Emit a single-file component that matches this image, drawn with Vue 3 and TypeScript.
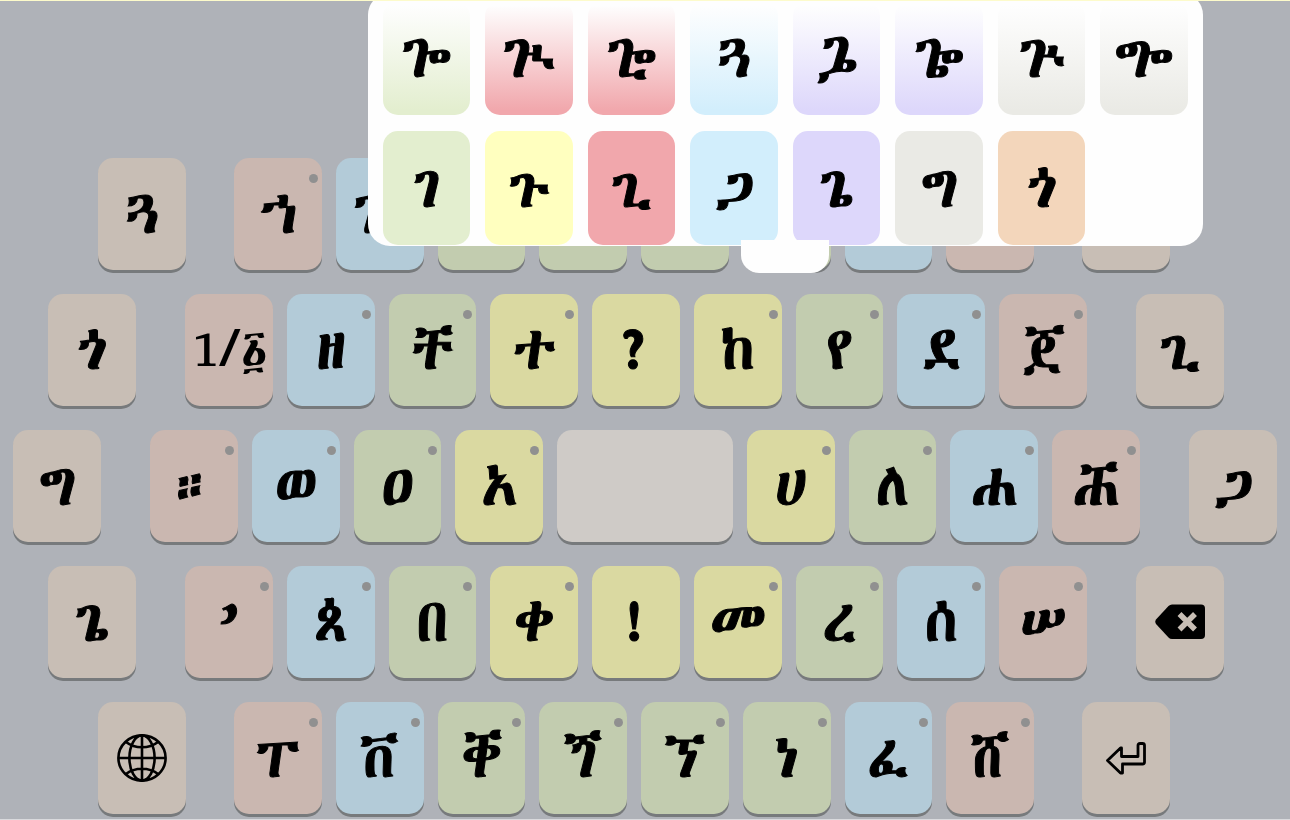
<script setup lang="ts">
type Tone = 'tan' | 'pink' | 'blue' | 'green' | 'yellow' | 'space'
type Icon = 'globe' | 'backspace' | 'enter'

interface Key {
  label: string
  tone: Tone
  dot?: boolean
  icon?: Icon
  name?: string
}

interface Row {
  id: string
  left: Key
  main: Key[]
  right: Key
}

interface Choice {
  label: string
  tone: string
}

const k = (label: string, tone: Tone, dot = true): Key => ({ label, tone, dot })
const side = (label: string): Key => ({ label, tone: 'tan' })
const action = (icon: Icon, name: string): Key => ({ label: '', tone: 'tan', icon, name })

const rows: Row[] = [
  {
    id: 'outer',
    left: side('ጓ'),
    main: [
      k('ኀ', 'pink'), k('ጒ', 'blue', false), k('', 'green', false), k('', 'green', false),
      k('', 'green', false), k('', 'green', false), k('', 'blue', false), k('', 'pink', false),
    ],
    right: side(''),
  },
  {
    id: 'middle',
    left: side('ጎ'),
    main: [
      k('1/፩', 'pink', false), k('ዘ', 'blue'), k('ቸ', 'green'), k('ተ', 'yellow'), k('?', 'yellow', false),
      k('ከ', 'yellow'), k('የ', 'green'), k('ደ', 'blue'), k('ጀ', 'pink'),
    ],
    right: side('ጊ'),
  },
  {
    id: 'home',
    left: side('ግ'),
    main: [
      k('።', 'pink'), k('ወ', 'blue'), k('ዐ', 'green'), k('አ', 'yellow'),
      { label: '', tone: 'space', name: 'Space' },
      k('ሀ', 'yellow'), k('ለ', 'green'), k('ሐ', 'blue'), k('𞟠', 'pink'),
    ],
    right: side('ጋ'),
  },
  {
    id: 'middle',
    left: side('ጌ'),
    main: [
      k('’', 'pink'), k('ጰ', 'blue'), k('በ', 'green'), k('ቀ', 'yellow'), k('!', 'yellow', false),
      k('መ', 'yellow'), k('ረ', 'green'), k('ሰ', 'blue'), k('ሠ', 'pink'),
    ],
    right: action('backspace', 'Backspace'),
  },
  {
    id: 'outer',
    left: action('globe', 'Switch keyboard'),
    main: [
      k('ፐ', 'pink'), k('ቨ', 'blue'), k('ቐ', 'green'), k('ጘ', 'green'),
      k('ኘ', 'green'), k('ነ', 'green'), k('ፈ', 'blue'), k('ሸ', 'pink'),
    ],
    right: action('enter', 'Enter'),
  },
]

const choices: Choice[] = [
  { label: 'ጐ', tone: 'lime fade' },
  { label: 'ጒ', tone: 'rose fade' },
  { label: '𞟸', tone: 'rose fade' },
  { label: 'ጓ', tone: 'sky fade' },
  { label: 'ጔ', tone: 'violet fade' },
  { label: '𞟹', tone: 'violet fade' },
  { label: 'ጕ', tone: 'stone fade' },
  { label: '𞟺', tone: 'stone fade' },
  { label: 'ገ', tone: 'lime' },
  { label: 'ጉ', tone: 'lemon' },
  { label: 'ጊ', tone: 'rose' },
  { label: 'ጋ', tone: 'sky' },
  { label: 'ጌ', tone: 'violet' },
  { label: 'ግ', tone: 'stone' },
  { label: 'ጎ', tone: 'peach' },
]

const cells = (row: Row) => [
  { part: 'edge', keys: [row.left] },
  { part: 'main', keys: row.main },
  { part: 'edge', keys: [row.right] },
]
</script>

<template>
  <main class="keyboard">
    <div v-for="(row, r) in rows" :key="r" class="row" :class="row.id">
      <div v-for="(cell, c) in cells(row)" :key="c" class="group" :class="cell.part">
        <button
          v-for="(key, i) in cell.keys"
          :key="i"
          type="button"
          class="key"
          :class="[key.tone, { number: key.label.startsWith('1') }]"
          :aria-label="key.name"
        >
          <span v-if="key.label" class="label">{{ key.label }}</span>
          <svg v-if="key.icon === 'globe'" class="globe" viewBox="0 0 50 48" fill="none" stroke="#000" stroke-width="2.6">
            <ellipse cx="25" cy="24" rx="23.6" ry="22.6" />
            <ellipse cx="25" cy="24" rx="12.6" ry="22.6" />
            <path d="M25 1.4V46.6M1.4 24H48.6M9 8C18 15 32 15 41 8M9 40C18 33 32 33 41 40" />
          </svg>
          <svg v-if="key.icon === 'backspace'" class="backspace" viewBox="0 0 50 36">
            <path d="M17 .5H46Q50 .5 50 4.500V31Q50 35 46 35H17Q15 35 13.500 33.500L1 20Q-.5 17.800 1 15.500L13.500 2Q15 .5 17 .5Z" />
            <path d="M24.500 10L40 25.500M40 10L24.500 25.500" stroke="#c8beb5" stroke-width="5.500" />
          </svg>
          <svg v-if="key.icon === 'enter'" class="enter" viewBox="0 0 40 33" fill="none" stroke="#000" stroke-width="2.800" stroke-linejoin="round">
            <path d="M15.500 6V14.500H32V3.500Q32 1.500 34 1.500H36.500Q38.500 1.500 38.500 3.500V20Q38.500 22 36.500 22H16.500V31L14.500 31L1.500 18.500L14.500 6Z" />
          </svg>
          <i v-if="key.dot" class="dot"></i>
        </button>
      </div>
    </div>

    <div class="popup">
      <div class="tail"></div>
      <div class="choices">
        <button v-for="(choice, i) in choices" :key="i" type="button" class="choice" :class="choice.tone">
          <span class="label">{{ choice.label }}</span>
        </button>
      </div>
    </div>
  </main>
</template>

<style>
body {
  margin: 0;
}
</style>

<style scoped>
.keyboard {
  position: relative;
  box-sizing: border-box;
  min-height: 100vh;
  padding: 157px 0 4px;
  display: flex;
  flex-direction: column;
  gap: 24px;
  overflow: hidden;
  background: #afb2b8;
  border-top: 1px solid #fdfbcb;
  border-bottom: 1px solid #d9dadd;
}

.row {
  display: flex;
  gap: 49px;
}

.outer {
  padding: 0 120px 0 98px;
  gap: 48px;
}

.middle {
  padding: 0 66px 0 48px;
}

.home {
  padding: 0 13px;
}

.group {
  display: flex;
  gap: 14px;
  min-width: 0;
}

.edge {
  flex: 88 1 0;
}

.outer .main {
  flex: 800 1 0;
}

.middle .main {
  flex: 901 1 0;
}

.home .main {
  flex: 988 1 0;
}

.key,
.choice {
  display: flex;
  align-items: center;
  justify-content: center;
  min-width: 0;
  margin: 0;
  padding: 0;
  border: 0;
  border-radius: 15px;
  color: #000;
  font-family: "Abyssinica SIL", "Noto Serif Ethiopic", "Open Sans", serif;
  font-size: 60px;
  font-weight: 400;
  line-height: 60px;
  white-space: nowrap;
  -webkit-text-stroke: 1px #000;
}

.label {
  padding-bottom: 2px;
}

.key {
  position: relative;
  flex: 1 1 0;
  height: 112px;
  box-shadow: 0 3px 0 #777a7c;
}

.number {
  font-size: 53px;
  -webkit-text-stroke: 0;
}

.tan { background: #c8beb5; }
.pink { background: #cab7b0; }
.blue { background: #b3cbd8; }
.green { background: #c2ccaf; }
.yellow { background: #dad9a1; }
.space { background: #cfcbc7; flex-grow: 2; }

.dot {
  position: absolute;
  top: 16px;
  right: 4px;
  width: 9px;
  height: 9px;
  border-radius: 50%;
  background: #909090;
}

.globe {
  width: 50px;
  height: 48px;
}

.backspace {
  width: 50px;
  height: 36px;
}

.enter {
  width: 40px;
  height: 33px;
}

.popup {
  position: absolute;
  top: -8px;
  left: 28.5%;
  right: 6.75%;
  box-sizing: border-box;
  padding: 8px 15px 1px;
  border-radius: 22px;
  background: #fefefe;
}

.choices {
  display: grid;
  grid-template-columns: repeat(8, 1fr);
  gap: 16px 15px;
}

.choice {
  height: 114px;
  background: var(--tone);
}

.fade {
  background: linear-gradient(#fefefe 4%, var(--tone) 96%);
}

.tail {
  position: absolute;
  top: 247px;
  left: 44.7%;
  width: 10.5%;
  height: 33px;
  border-radius: 0 0 18px 18px;
  background: #fefefe;
}

.lime { --tone: #e3eecf; }
.lemon { --tone: #ffffbf; }
.rose { --tone: #f1a7ac; }
.sky { --tone: #d2eefc; }
.violet { --tone: #ddd7fb; }
.stone { --tone: #eaeae5; }
.peach { --tone: #f3d6bb; }
</style>
